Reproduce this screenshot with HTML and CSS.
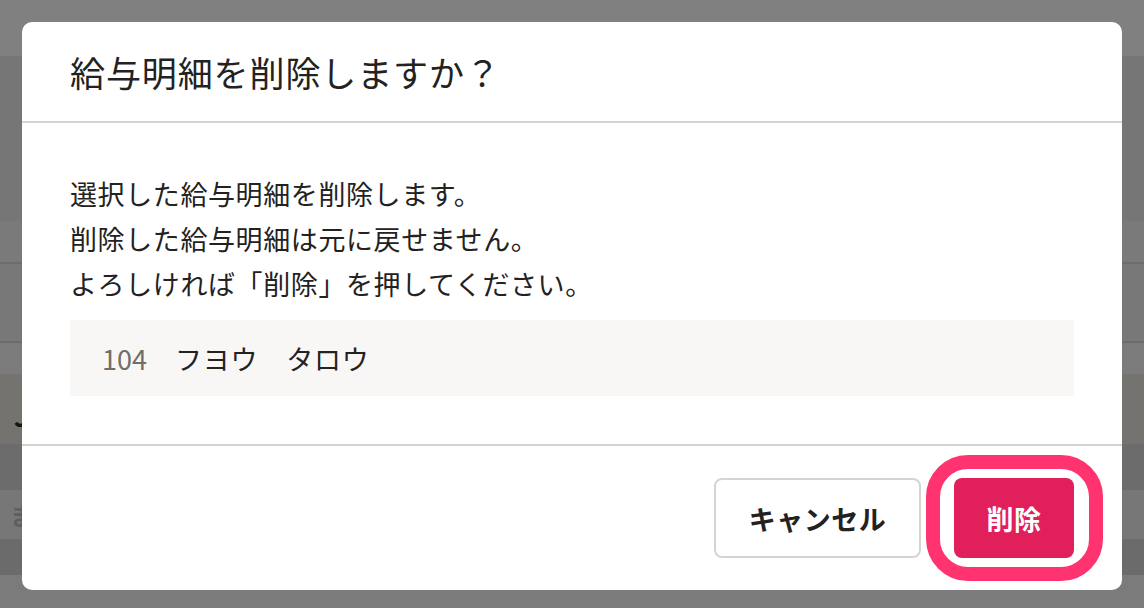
FILE: index.html
```html
<!DOCTYPE html>
<html lang="ja">
<head>
<meta charset="utf-8">
<title>給与明細を削除しますか？</title>
<link rel="stylesheet" href="styles.css">
</head>
<body>
<div class="page">
  <div class="band b1"></div>
  <div class="band b2"></div>
  <div class="band b3"></div>
  <div class="band b4"></div>
  <div class="band b5"></div>
  <div class="band b6"><span class="peek-j">J</span></div>
  <div class="band b7"></div>
  <div class="band b8"><span class="peek-ma">ま</span></div>
  <div class="band b9"></div>
  <div class="band b10"></div>
</div>

<div class="overlay">
  <div class="modal" role="dialog" aria-labelledby="dlg-title">
    <header class="modal-header">
      <h1 id="dlg-title" class="modal-title">給与明細を削除しますか？</h1>
    </header>
    <div class="modal-body">
      <p class="message">選択した給与明細を削除します。<br>削除した給与明細は元に戻せません。<br>よろしければ「削除」を押してください。</p>
      <div class="target">
        <span class="target-no">104</span>
        <span class="target-name">フヨウ　タロウ</span>
      </div>
    </div>
    <footer class="modal-footer">
      <button class="btn btn-secondary" type="button">キャンセル</button>
      <button class="btn btn-danger" type="button">削除</button>
    </footer>
  </div>
</div>
</body>
</html>
```

FILE: styles.css
```css
* { box-sizing: border-box; }

html, body {
  margin: 0;
  padding: 0;
  width: 1144px;
  height: 608px;
  overflow: hidden;
}

body {
  font-family: "Noto Sans CJK JP", "Noto Sans", sans-serif;
  color: #23221e;
  background: #7b7b7b;
  position: relative;
}

/* background page (dimmed) */
.page {
  display: flex;
  flex-direction: column;
  width: 100%;
}
.band { width: 100%; display: flex; align-items: center; overflow: hidden; }
.b1 { height: 56px; background: #808080; }
.b2 { height: 165px; background: #767676; }
.b3 { height: 43px; background: #7a7a7a; border-bottom: 2px solid #6c6c6c; }
.b4 { height: 79px; background: #787878; border-bottom: 2px solid #6c6c6c; }
.b5 { height: 31px; background: #7b7b7b; }
.b6 { height: 70px; background: #74736f; }
.b7 { height: 46px; background: #6c6c6c; }
.b8 { height: 49px; background: #777777; }
.b9 { height: 36px; background: #6b6b6b; }
.b10 { height: 31px; background: #7b7b7b; }

.peek-j {
  padding-left: 14px;
  padding-top: 12px;
  font-size: 26px;
  font-weight: 700;
  color: #151515;
}
.peek-ma {
  padding-left: 10px;
  font-size: 24px;
  font-weight: 700;
  color: #5e5e5e;
}

/* overlay + modal */
.overlay {
  position: absolute;
  inset: 0;
  padding: 22px 22px 18px 22px;
  display: flex;
}

.modal {
  width: 1100px;
  height: 568px;
  background: #ffffff;
  border-radius: 10px;
  display: flex;
  flex-direction: column;
}

.modal-header {
  height: 102px;
  padding: 0 48px;
  display: flex;
  align-items: center;
  border-bottom: 2px solid #d6d4cf;
}

.modal-title {
  margin: 0;
  font-size: 35px;
  font-weight: 400;
  letter-spacing: 0.9px;
  line-height: 1;
  color: #23221e;
}

.modal-body {
  flex: 1;
  padding: 48px;
  border-bottom: 2px solid #d6d4cf;
}

.message {
  margin: 0 0 14px 0;
  font-size: 27px;
  line-height: 45px;
  letter-spacing: 0.6px;
  color: #23221e;
}

.target {
  height: 76px;
  background: #f8f7f6;
  padding: 0 32px;
  display: flex;
  align-items: center;
  gap: 28px;
  font-size: 27px;
}
.target-no {
  color: #716e67;
}
.target-name {
  color: #23221e;
  letter-spacing: 0.8px;
}

.modal-footer {
  height: 144px;
  padding: 32px 48px;
  display: flex;
  justify-content: flex-end;
  align-items: center;
  gap: 33px;
}

.btn {
  height: 80px;
  border-radius: 8px;
  font-family: inherit;
  font-size: 27px;
  font-weight: 700;
  letter-spacing: 0.5px;
  cursor: pointer;
  display: flex;
  align-items: center;
  justify-content: center;
}

.btn-secondary {
  width: 207px;
  background: #ffffff;
  border: 2px solid #d6d4cf;
  color: #23221e;
}

.btn-danger {
  width: 120px;
  background: #e01f5b;
  border: none;
  color: #ffffff;
  position: relative;
}

/* highlight ring annotation */
.btn-danger::after {
  content: "";
  position: absolute;
  top: -23px;
  bottom: -23px;
  left: -28px;
  right: -29px;
  border: 14px solid #ff3370;
  border-radius: 42px;
  pointer-events: none;
}
```
